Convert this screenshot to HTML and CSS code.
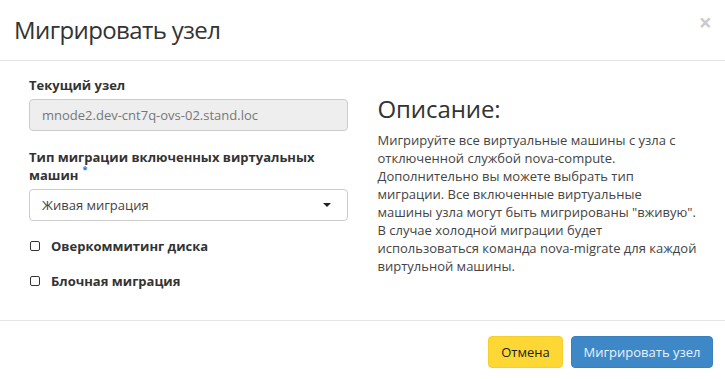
FILE: index.html
```html
<!DOCTYPE html>
<html lang="ru">
<head>
<meta charset="utf-8">
<title>Мигрировать узел</title>
<link rel="stylesheet" href="styles.css">
</head>
<body>
<div class="modal">
  <div class="modal-header">
    <h4 class="modal-title">Мигрировать узел</h4>
    <span class="close">×</span>
  </div>
  <div class="modal-body">
    <div class="col">
      <div class="form-group">
        <label class="control-label">Текущий узел</label>
        <div class="form-control readonly">mnode2.dev-cnt7q-ovs-02.stand.loc</div>
      </div>
      <div class="form-group last">
        <label class="control-label">Тип миграции включенных виртуальных машин<span class="req">*</span></label>
        <div class="form-control select">
          <span>Живая миграция</span>
          <span class="caret"></span>
        </div>
      </div>
      <div class="checkbox"><span class="box"></span><span class="cb-label">Оверкоммитинг диска</span></div>
      <div class="checkbox"><span class="box"></span><span class="cb-label">Блочная миграция</span></div>
    </div>
    <div class="col col-right">
      <h3 class="desc-title">Описание:</h3>
      <p class="desc">Мигрируйте все виртуальные машины с узла с отключенной службой nova-compute.<br>Дополнительно вы можете выбрать тип<br>миграции. Все включенные виртуальные<br>машины узла могут быть мигрированы "вживую". В случае холодной миграции будет<br>использоваться команда nova-migrate для каждой виртульной машины.</p>
    </div>
  </div>
  <div class="modal-footer">
    <button class="btn btn-cancel">Отмена</button>
    <button class="btn btn-primary">Мигрировать узел</button>
  </div>
</div>
</body>
</html>
```
FILE: styles.css
```css
* { box-sizing: border-box; }
html, body { margin: 0; padding: 0; background: #fff; }
body {
  font-family: "Open Sans", "Noto Sans", sans-serif;
  font-size: 13px;
  color: #333;
  width: 725px;
  height: 379px;
  overflow: hidden;
}
.modal { width: 725px; }
.modal-header {
  display: flex;
  justify-content: space-between;
  align-items: flex-start;
  padding: 15px 14px 15px 14px;
  border-bottom: 1px solid #e5e5e5;
  height: 61px;
}
.modal-title {
  margin: 0;
  font-size: 24px;
  font-weight: 400;
  line-height: 30px;
  color: #333;
  letter-spacing: -0.6px;
}
.close {
  font-size: 23px;
  font-weight: 700;
  line-height: 1;
  color: #000;
  opacity: 0.2;
  margin-top: -4px;
  margin-right: -1px;
}
.modal-body {
  display: grid;
  grid-template-columns: 1fr 1fr;
  padding: 15px 14px 0 14px;
  height: 260px;
  border-bottom: 1px solid #e5e5e5;
}
.col { padding: 0 15px; }
.col-right { padding-right: 10px; }
.form-group { margin-bottom: 17px; }
.form-group.last { margin-bottom: 16px; }
.control-label {
  display: block;
  font-weight: 700;
  font-size: 13px;
  line-height: 18px;
  margin-bottom: 5px;
  color: #333;
}
.req {
  color: #0d7ad6;
  font-size: 9px;
  line-height: 9px;
  vertical-align: top;
  margin-left: 4px;
  position: relative;
  top: -1px;
}
.form-control {
  height: 32px;
  border: 1px solid #ccc;
  border-radius: 4px;
  padding: 0 12px;
  display: flex;
  align-items: center;
  font-size: 13px;
  color: #555;
  background: #fff;
}
.form-control.readonly { background: #eee; color: #777; }
.form-control.select {
  justify-content: space-between;
  color: #444;
  padding-right: 16px;
}
.caret {
  width: 0; height: 0;
  border-left: 4px solid transparent;
  border-right: 4px solid transparent;
  border-top: 4.5px solid #222;
}
.checkbox {
  display: flex;
  align-items: center;
  height: 18px;
  margin-bottom: 17px;
}
.box {
  width: 10px; height: 10px;
  border: 1.5px solid #333;
  border-radius: 2px;
  margin-left: 1px;
  margin-right: 11px;
}
.cb-label { font-weight: 700; color: #333; }
.desc-title {
  font-size: 24px;
  font-weight: 400;
  line-height: 26px;
  margin: 20px 0 9px 0;
  color: #333;
  letter-spacing: -0.1px;
}
.desc {
  margin: 0;
  font-size: 13px;
  line-height: 18px;
  color: #444;
}
.modal-footer {
  display: flex;
  justify-content: flex-end;
  gap: 8px;
  padding: 15px 12px 0 12px;
}
.btn {
  height: 32px;
  border-radius: 4px;
  border: 1px solid transparent;
  font-family: "Open Sans", "Noto Sans", sans-serif;
  font-size: 13px;
  padding: 0 6px;
  white-space: nowrap;
}
.btn-cancel { background: #fdd835; border-color: #f5cf2c; color: #222; width: 75px; }
.btn-primary { background: #3f88c8; border-color: #3a80bd; color: #eaf2fa; width: 142px; }
```
